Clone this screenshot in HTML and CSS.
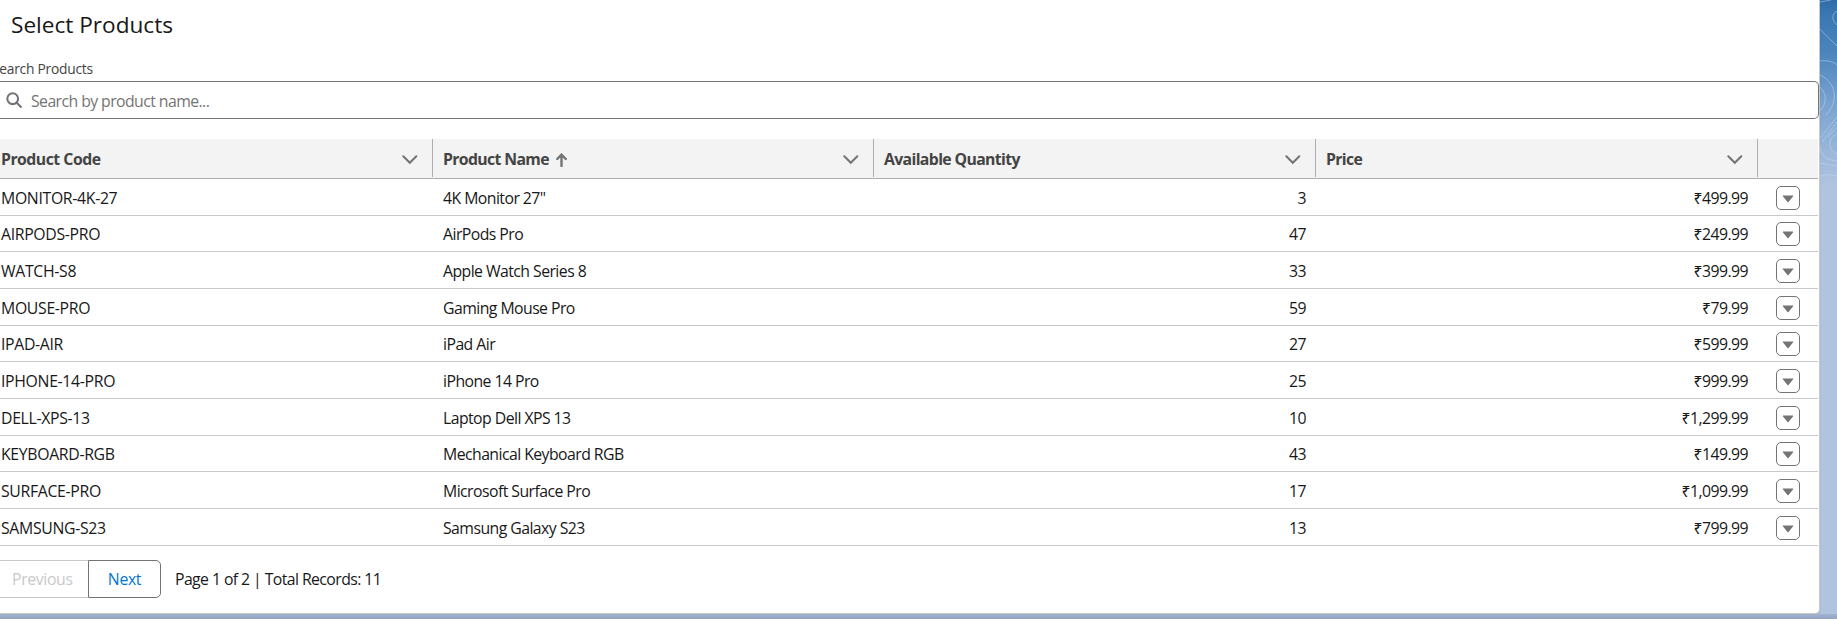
FILE: index.html
```
<!DOCTYPE html>
<html lang="en">
<head>
<meta charset="utf-8">
<title>Select Products</title>
<link rel="stylesheet" href="styles.css">
</head>
<body>
<div class="page">
<svg class="pattern" width="17" height="200" viewBox="0 0 17 200" aria-hidden="true">
<path d="M0 2L11 0M17 11C11 14 12 21 17 25M0 29C6 36 12 41 17 46M0 61C8 60 14 62 17 65M0 75C18 84 18 103 6 115M0 87C7 94 7 104 0 111M17 117L0 138M17 122L2 142M17 127L8 137M17 134C7 138 8 151 17 154M0 146C1 157 8 160 17 161M0 163L17 166M0 176Q9 173 17 176"/>
</svg>
<main class="card">
<h1 class="title">Select Products</h1>
<label class="label" for="q">Search Products</label>
<div class="search">
<svg class="search-icon" width="17" height="17" viewBox="0 0 17 17"><circle cx="6.7" cy="6.7" r="5.4" /><path d="M10.700 10.700L15.500 15.500"/></svg>
<input id="q" class="search-input" type="text" placeholder="Search by product name...">
</div>
<div class="table" id="table">
<div class="row head">
<div class="cell"><span>Product Code</span><svg class="chev" width="16" height="10" viewBox="0 0 16 10"><path d="M1.3 1.2L7.8 7.8L14.3 1.2"/></svg></div>
<div class="cell"><span>Product Name</span><svg class="arrow" width="12" height="14" viewBox="0 0 12 14"><path d="M5.5 13V2M1.2 6L5.5 1.6L9.8 6"/></svg><svg class="chev" width="16" height="10" viewBox="0 0 16 10"><path d="M1.3 1.2L7.8 7.8L14.3 1.2"/></svg></div>
<div class="cell"><span>Available Quantity</span><svg class="chev" width="16" height="10" viewBox="0 0 16 10"><path d="M1.3 1.2L7.8 7.8L14.3 1.2"/></svg></div>
<div class="cell"><span>Price</span><svg class="chev" width="16" height="10" viewBox="0 0 16 10"><path d="M1.3 1.2L7.8 7.8L14.3 1.2"/></svg></div>
<div class="cell"></div>
</div>
</div>
<div class="footer">
<button class="btn prev" disabled>Previous</button><button class="btn next">Next</button>
<span class="info">Page 1 of 2 | Total Records: 11</span>
</div>
</main>
</div>
<script src="table.js"></script>
</body>
</html>
```
FILE: table.js
```
const products = [
  ["MONITOR-4K-27", "4K Monitor 27\"", "3", "₹499.99"],
  ["AIRPODS-PRO", "AirPods Pro", "47", "₹249.99"],
  ["WATCH-S8", "Apple Watch Series 8", "33", "₹399.99"],
  ["MOUSE-PRO", "Gaming Mouse Pro", "59", "₹79.99"],
  ["IPAD-AIR", "iPad Air", "27", "₹599.99"],
  ["IPHONE-14-PRO", "iPhone 14 Pro", "25", "₹999.99"],
  ["DELL-XPS-13", "Laptop Dell XPS 13", "10", "₹1,299.99"],
  ["KEYBOARD-RGB", "Mechanical Keyboard RGB", "43", "₹149.99"],
  ["SURFACE-PRO", "Microsoft Surface Pro", "17", "₹1,099.99"],
  ["SAMSUNG-S23", "Samsung Galaxy S23", "13", "₹799.99"],
];
const table = document.getElementById("table");
for (const [code, name, qty, price] of products) {
  const row = document.createElement("div");
  row.className = "row";
  row.innerHTML =
    `<div class="cell code"><span>${code}</span></div>` +
    `<div class="cell name"><span>${name}</span></div>` +
    `<div class="cell num"><span>${qty}</span></div>` +
    `<div class="cell num"><span>${price}</span></div>` +
    `<div class="cell act"><button class="menu" aria-label="Actions"><svg width="12" height="8" viewBox="0 0 12 8"><path d="M1 .5H11Q11.6.8 11 1.5L6.5 7Q6 7.500 5.500 7L1 1.500Q.4.8 1 .5Z"/></svg></button></div>`;
  table.appendChild(row);
}
```
FILE: styles.css
```
* { box-sizing: border-box; }
body { margin: 0; background: #fff; font-family: "Open Sans", "Noto Sans", sans-serif; font-size: 15.8px; color: #181818; overflow: hidden; }
.page { position: relative; height: 619px; background: linear-gradient(#2e6ca9 0, #3a78b4 15px, #4e86bd 55px, #7ba3d0 105px, #b0c4df 185px, #b0c4df 100%); }
.page::after { content: ""; position: absolute; left: 0; right: 0; bottom: 0; height: 5px; background: linear-gradient(#a3b3ce, #92a4c2); }
.pattern { position: absolute; left: 1820px; top: 0; fill: none; stroke: #c6daf0; stroke-opacity: .5; stroke-width: 1; }
.card { width: 1820px; height: 614px; background: #fff; border-right: 1px solid #c9c9c9; border-bottom: 1px solid #c9c9c9; border-radius: 0 0 5px 0; box-shadow: 0 2px 2px rgba(0,0,0,.1); }
.title { margin: 0; padding: 8px 0 0 11px; height: 56px; font-size: 22.6px; line-height: 33px; font-weight: 400; letter-spacing: 0; }
.label { display: block; height: 25px; margin-left: -8px; font-size: 13.8px; line-height: 25px; color: #444; letter-spacing: -.25px; white-space: nowrap; }
.search { display: flex; align-items: center; height: 38px; border: 1px solid #747474; border-left: 0; border-radius: 0 5px 5px 0; padding-left: 6px; }
.search-icon { fill: none; stroke: #747474; stroke-width: 2.1; margin-right: 8px; flex: none; }
.search-input { border: 0; outline: 0; padding: 1px 0 0; font: inherit; flex: 1; letter-spacing: -.57px; background: transparent; }
.search-input::placeholder { color: #747474; opacity: 1; }
.table { width: 1818px; margin-top: 20px; display: grid; grid-template-rows: 40px repeat(10, 36.67px); }
.row { display: grid; grid-template-columns: 433px 441px 442px 442px 1fr; border-bottom: 1px solid #c9c9c9; }
.cell { display: flex; align-items: center; padding: 2px 10px 0 10px; white-space: nowrap; }
.cell:first-child { padding-left: 1px; }
.code span { letter-spacing: -.32px; }
.name span { letter-spacing: -.55px; }
.num span { letter-spacing: -.55px; }
.num { justify-content: flex-end; }
.head { background: #f3f3f3; border-color: #aeaeae; font-weight: 700; color: #444; }
.head .cell { height: 38px; padding-top: 1px; border-right: 1px solid #aeaeae; padding-right: 14px; }
.head .cell:last-child { border: 0; }
.head span { letter-spacing: -.64px; }
.head .cell:first-child span { letter-spacing: -.5px; }
.chev { margin-left: auto; margin-top: 3px; fill: none; stroke: #747474; stroke-width: 2; stroke-linecap: round; }
.arrow { margin-left: 7px; margin-top: 2px; fill: none; stroke: #747474; stroke-width: 2.4; stroke-linecap: round; }
.act { padding: 2px 0 0 18px; }
.menu { width: 24px; height: 24px; padding: 2px 0 0; border: 1px solid #747474; border-radius: 5px; background: #fff; display: flex; align-items: center; justify-content: center; }
.menu svg { fill: #747474; }
.footer { display: flex; align-items: center; margin-top: 14px; height: 38px; }
.btn { height: 38px; font: inherit; background: #fff; letter-spacing: -.35px; padding: 1px 0 0; }
.prev { width: 88px; border: 1px solid #c9c9c9; border-width: 1px 0; color: #c9c9c9; text-align: left; padding-left: 12px; }
.next { width: 73px; border: 1px solid #747474; border-radius: 0 5px 5px 0; color: #0176d3; }
.info { margin-left: 14px; padding-top: 1px; letter-spacing: -.58px; }
```
